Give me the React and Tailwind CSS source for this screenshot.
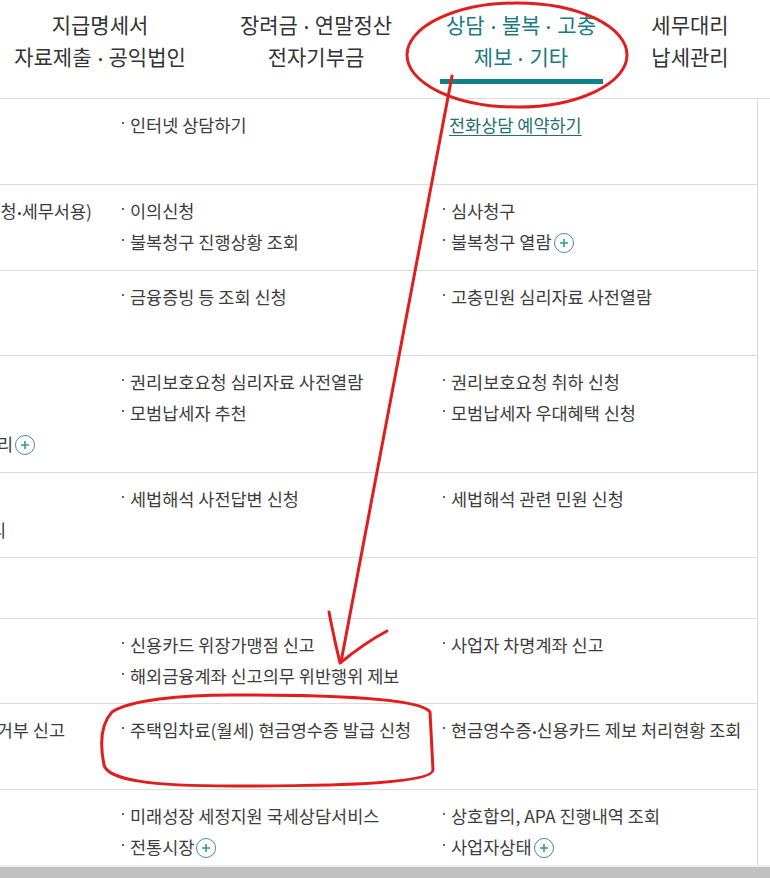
import React from "react";

// narrow middle dot, the CJK font's own one is full width
function Dot({ cls = "mx-[1px]" }) {
  return <span className={`inline-block w-[3px] h-[3px] rounded-full bg-current align-middle ${cls}`} />;
}

const HD = <Dot cls="mx-[7px]" />;

// tab strip on top
const TABS = [
  { key: "a", w: "w-[200px]", lines: [<>지급명세서</>, <>자료제출{HD}공익법인</>] },
  { key: "b", w: "w-[232px]", lines: [<>장려금{HD}연말정산</>, <>전자기부금</>] },
  { key: "c", w: "w-[178px]", lines: [<>상담{HD}불복{HD}고충</>, <>제보{HD}기타</>], active: true },
  { key: "d", w: "w-[160px]", lines: [<>세무대리</>, <>납세관리</>] },
];

// left column is cut off by the viewport; pr puts the visible tail where it sits
const ROWS = [
  { h: "h-[86px]", mid: ["인터넷 상담하기"], right: [{ t: "전화상담 예약하기", link: true }] },
  {
    h: "h-[86px]",
    left: [{ t: <>· 세무서 방문 민원(신고<Dot />신청<Dot />세무서용)</>, pr: "pr-[15px]" }],
    mid: ["이의신청", "불복청구 진행상황 조회"],
    right: ["심사청구", { t: "불복청구 열람", plus: true }],
  },
  { h: "h-[85px]", mid: ["금융증빙 등 조회 신청"], right: ["고충민원 심리자료 사전열람"] },
  {
    h: "h-[117px]",
    left: [null, null, { t: "· 납세자보호관 상담관리", pr: "pr-[72px]", plus: true }],
    mid: ["권리보호요청 심리자료 사전열람", "모범납세자 추천"],
    right: ["권리보호요청 취하 신청", "모범납세자 우대혜택 신청"],
  },
  {
    h: "h-[85px]",
    left: [null, { t: "· 세법해석 질의회신 관리", pr: "pr-[101px]" }],
    mid: ["세법해석 사전답변 신청"],
    right: ["세법해석 관련 민원 신청"],
  },
  { h: "h-[61px]" },
  {
    h: "h-[85px]",
    mid: ["신용카드 위장가맹점 신고", "해외금융계좌 신고의무 위반행위 제보"],
    right: ["사업자 차명계좌 신고"],
  },
  {
    h: "h-[86px]",
    left: [{ t: "· 현금영수증 발급거부 신고", pr: "pr-[42px]" }],
    mid: ["주택임차료(월세) 현금영수증 발급 신청"],
    right: [<>현금영수증<Dot />신용카드 제보 처리현황 조회</>],
  },
  {
    h: "h-[90px]",
    mid: ["미래성장 세정지원 국세상담서비스", { t: "전통시장", plus: true }],
    right: ["상호합의, APA 진행내역 조회", { t: "사업자상태", plus: true }],
  },
];

function PlusCircle() {
  return (
    <span className="inline-flex items-center justify-center w-[20px] h-[20px] rounded-full border-[1.5px] border-[#4a8d91] ml-[2px] shrink-0">
      <svg width="10" height="10" viewBox="0 0 10 10">
        <path d="M5 1v8M1 5h8" stroke="#2f9a9c" strokeWidth="1.6" />
      </svg>
    </span>
  );
}

function Item({ item }) {
  const it = item && item.t !== undefined ? item : { t: item };
  if (it.link) {
    return (
      <div className="h-[31px] flex items-center ml-[6px]">
        <a href="#" className="text-[#1f6f73] underline underline-offset-[3px] decoration-[#1f6f73]">
          {it.t}
        </a>
      </div>
    );
  }
  return (
    <div className="h-[31px] flex items-center whitespace-nowrap">
      <span className="w-[2px] h-[2px] bg-[#666] mr-[6px] -translate-y-[3px] shrink-0" />
      <span>{it.t}</span>
      {it.plus && <PlusCircle />}
    </div>
  );
}

function Annotations() {
  return (
    <svg className="absolute inset-0 pointer-events-none" width="770" height="878" viewBox="0 0 770 878">
      <g fill="none" stroke="#e11d1f" strokeWidth="3" strokeLinecap="round" strokeLinejoin="round">
        <ellipse cx="517" cy="55" rx="110" ry="52" />
        <path d="M452 76 L341 662" />
        <path d="M329 612 C332 628 336 646 340 663 C356 650 370 640 387 631" />
        <path d="M233 695 C330 695 420 698 430 712 L433 770 C432 782 360 786 233 786 C150 786 108 780 104 765 C100 745 100 725 112 712 C130 700 180 695 233 695 Z" />
      </g>
    </svg>
  );
}

export default function App() {
  return (
    <div className="relative w-[770px] h-[878px] overflow-hidden bg-white flex flex-col font-['Noto_Sans_CJK_KR',sans-serif] text-[#3d3d3d]">
      <header className="h-[99px] shrink-0 flex border-b border-[#dcdcdc]">
        {TABS.map((tab) => (
          <div key={tab.key} className={`${tab.w} shrink-0 flex flex-col items-center pt-[8px]`}>
            <div
              className={`text-[21px] leading-[32px] text-center whitespace-nowrap ${
                tab.active ? "text-[#197a80]" : "text-[#333]"
              }`}
            >
              {tab.lines.map((l, i) => (
                <div key={i}>{l}</div>
              ))}
            </div>
            {tab.active && <div className="mt-[7px] w-[163px] h-[5px] bg-[#0f8088]" />}
          </div>
        ))}
      </header>

      <div className="flex-1 min-h-0 overflow-hidden">
        <div className="w-[758px] h-full border-r border-[#d9d9d9] text-[17.5px]">
          {ROWS.map((row, i) => (
            <div key={i} className={`${row.h} flex border-b border-[#dcdcdc] pt-[11px]`}>
              <div className="w-[107px] shrink-0 overflow-hidden">
                {(row.left || []).map((it, j) =>
                  it ? (
                    <div key={j} className={`h-[31px] flex items-center justify-end whitespace-nowrap ${it.pr}`}>
                      <span className="shrink-0">{it.t}</span>
                      {it.plus && <PlusCircle />}
                    </div>
                  ) : (
                    <div key={j} className="h-[31px]" />
                  )
                )}
              </div>
              <div className="w-[323px] shrink-0 pl-[15px]">
                {(row.mid || []).map((it, j) => (
                  <Item key={j} item={it} />
                ))}
              </div>
              <div className="flex-1 pl-[13px]">
                {(row.right || []).map((it, j) => (
                  <Item key={j} item={it} />
                ))}
              </div>
            </div>
          ))}
        </div>
      </div>

      <div className="h-[2px] shrink-0 bg-[#efefef]" />
      <div className="h-[11px] shrink-0 bg-[#c1c1c1]" />

      <Annotations />
    </div>
  );
}
